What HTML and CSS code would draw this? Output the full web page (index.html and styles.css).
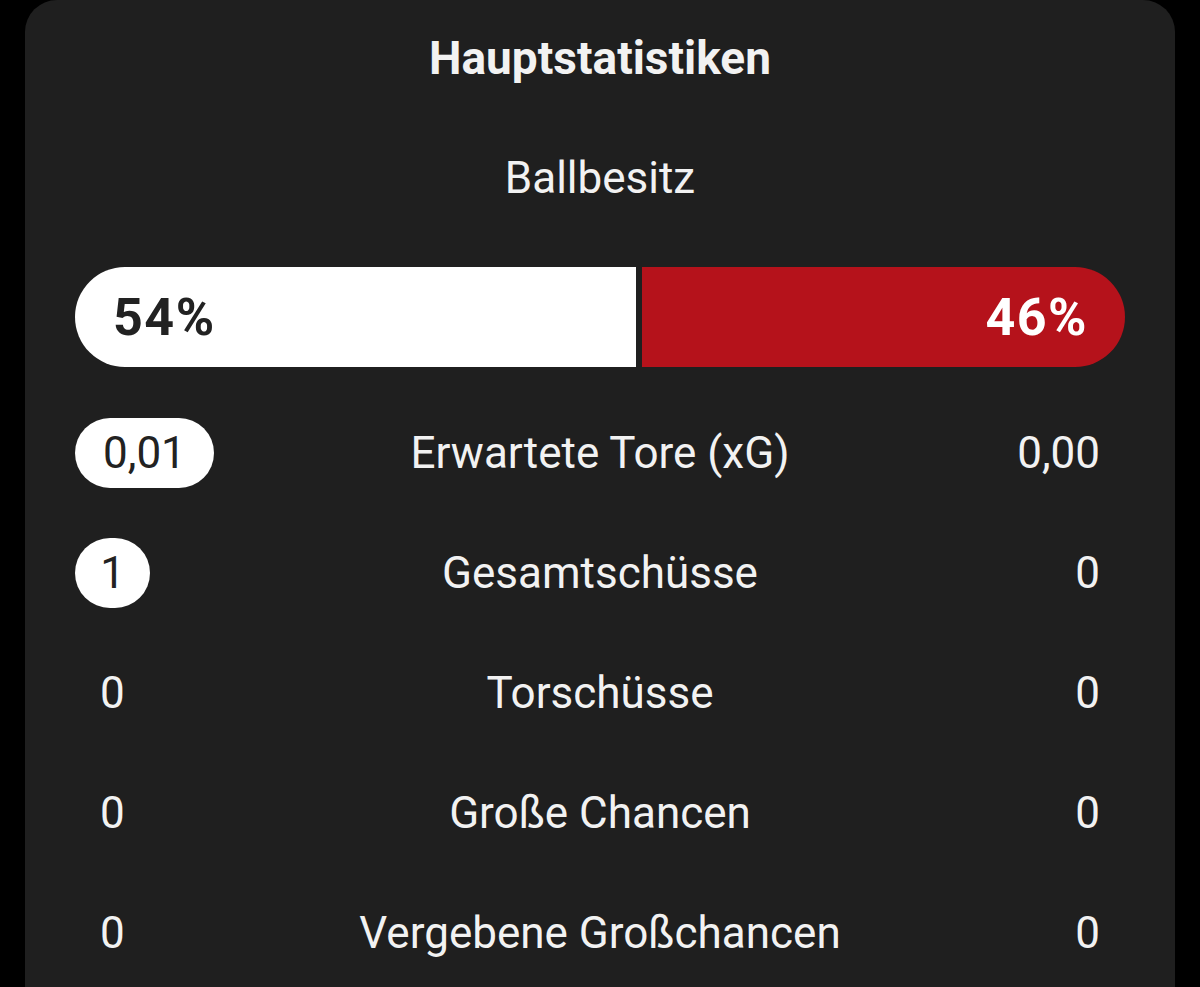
FILE: index.html
```html
<!DOCTYPE html>
<html lang="de">
<head>
<meta charset="utf-8">
<link rel="stylesheet" href="styles.css">
</head>
<body>
<div class="card">
  <h1 class="title">Hauptstatistiken</h1>
  <div class="possession-label">Ballbesitz</div>
  <div class="possession">
    <div class="bar home" style="flex-grow:54">54%</div>
    <div class="bar away" style="flex-grow:46">46%</div>
  </div>
  <div class="row">
    <div class="val left"><span class="pill">0,01</span></div>
    <div class="label">Erwartete Tore (xG)</div>
    <div class="val right"><span class="plain">0,00</span></div>
  </div>
  <div class="row">
    <div class="val left"><span class="pill round">1</span></div>
    <div class="label">Gesamtschüsse</div>
    <div class="val right"><span class="plain">0</span></div>
  </div>
  <div class="row">
    <div class="val left"><span class="plain">0</span></div>
    <div class="label">Torschüsse</div>
    <div class="val right"><span class="plain">0</span></div>
  </div>
  <div class="row">
    <div class="val left"><span class="plain">0</span></div>
    <div class="label">Große Chancen</div>
    <div class="val right"><span class="plain">0</span></div>
  </div>
  <div class="row">
    <div class="val left"><span class="plain">0</span></div>
    <div class="label">Vergebene Großchancen</div>
    <div class="val right"><span class="plain">0</span></div>
  </div>
</div>
</body>
</html>
```

FILE: styles.css
```css
html, body {
  margin: 0;
  padding: 0;
  background: #000;
  height: 100%;
  overflow: hidden;
}
body {
  font-family: Roboto, "Noto Sans", sans-serif;
  color: #f2f2f2;
}
.card {
  margin: 0 25px;
  background: #1f1f1f;
  border-radius: 32px 32px 0 0;
  padding: 26px 50px 0;
  min-height: 987px;
  box-sizing: border-box;
}
.title {
  margin: 0;
  text-align: center;
  font-size: 46px;
  font-weight: 700;
  line-height: 64px;
}
.possession-label {
  margin-top: 60px;
  text-align: center;
  font-size: 44px;
  line-height: 56px;
}
.possession {
  display: flex;
  gap: 6px;
  margin-top: 61px;
  height: 100px;
}
.bar {
  display: flex;
  align-items: center;
  font-size: 52px;
  font-weight: 700;
  letter-spacing: 1.5px;
  flex-basis: 0;
}
.home {
  background: #fff;
  color: #222;
  border-radius: 50px 0 0 50px;
  padding-left: 38px;
}
.away {
  background: #b5121b;
  color: #fff;
  border-radius: 0 50px 50px 0;
  justify-content: flex-end;
  padding-right: 37px;
}
.row {
  display: grid;
  grid-template-columns: 1fr auto 1fr;
  align-items: center;
  height: 120px;
}
.possession + .row {
  margin-top: 26px;
}
.label {
  font-size: 44px;
  text-align: center;
}
.val {
  display: flex;
  font-size: 44px;
}
.val.right {
  justify-content: flex-end;
}
.plain {
  padding: 0 25px;
  line-height: 70px;
}
.pill {
  background: #fff;
  color: #222;
  border-radius: 35px;
  padding: 0 28px;
  line-height: 70px;
}
.pill.round {
  padding: 0;
  width: 75px;
  text-align: center;
}
```
